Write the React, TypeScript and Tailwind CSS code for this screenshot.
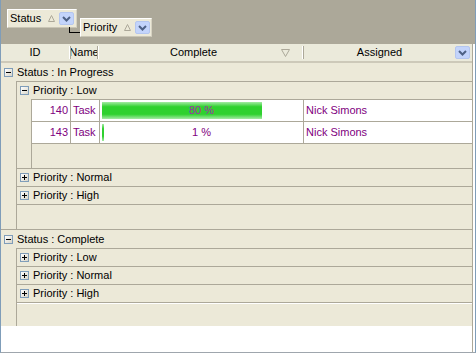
import React from "react";

const rowText = "text-[#800080]";

function Toggle({ open }: { open: boolean }) {
  return (
    <span className="relative inline-block h-[9px] w-[9px] shrink-0 border border-[#7f9db9] bg-gradient-to-br from-white to-[#d8d5c8]">
      <span className="absolute left-[1px] top-[3px] h-px w-[5px] bg-black" />
      {!open && <span className="absolute left-[3px] top-[1px] h-[5px] w-px bg-black" />}
    </span>
  );
}

function DropButton() {
  return (
    <span className="flex h-[13px] w-[15px] shrink-0 items-center justify-center rounded-[2px] border border-[#b4c6ef] bg-[#c3d4fb]">
      <svg width="9" height="6" viewBox="0 0 9 6">
        <path d="M1 1 L4.5 4.5 L8 1" fill="none" stroke="#4d6185" strokeWidth="2" />
      </svg>
    </span>
  );
}

function SortUp() {
  return (
    <svg width="7" height="7" viewBox="0 0 7 7" className="shrink-0">
      <polygon points="3.5,0.5 6.5,6.5 0.5,6.5" fill="none" stroke="#aca899" />
    </svg>
  );
}

function GroupRow({ label, open, top = true, h = "h-[18px]" }: { label: string; open: boolean; top?: boolean; h?: string }) {
  return (
    <div className={`flex ${h} shrink-0 items-center gap-[4px] pl-[3px] ${top ? "border-t border-[#aca899]" : ""}`}>
      <Toggle open={open} />
      <span className="whitespace-nowrap">{label}</span>
    </div>
  );
}

function DataRow({ id, pct }: { id: number; pct: number }) {
  return (
    <div className="flex h-[22px] border-t border-[#aca899] bg-white">
      <div className={`flex w-[39px] items-center justify-end border-r border-[#aca899] pr-[2px] ${rowText}`}>{id}</div>
      <div className={`flex w-[29px] items-center border-r border-[#aca899] pl-[2px] ${rowText}`}>Task</div>
      <div className="relative w-[204px] border-r border-[#aca899]">
        <div
          className="absolute bottom-[2px] left-[2px] top-[2px] bg-[linear-gradient(to_bottom,#a4eaa4_0%,#2fd12f_28%,#2fd12f_72%,#a4eaa4_100%)]"
          style={{ width: `${pct * 2}px` }}
        />
        <div className={`absolute inset-0 flex items-center justify-center ${pct > 50 ? "text-[#a02fa8]" : rowText}`}>
          {pct} %
        </div>
      </div>
      <div className={`flex flex-1 items-center pl-[2px] ${rowText}`}>Nick Simons</div>
    </div>
  );
}

function Chip({ label, textW, className }: { label: string; textW: string; className: string }) {
  return (
    <div
      className={`flex h-[19px] items-center border border-t-white border-l-white border-r-[#d6d2c2] border-b-[#c9c5b5] bg-[#ece9d8] pl-[2px] ${className}`}
    >
      <span className={`${textW} whitespace-nowrap`}>{label}</span>
      <SortUp />
      <span className="ml-[4px]">
        <DropButton />
      </span>
    </div>
  );
}

export default function App() {
  return (
    <div className="flex h-[353px] w-[476px] flex-col border-x border-b border-x-[#7f9db9] border-b-[#9fa6ad] bg-white font-['Liberation_Sans',Arial,sans-serif] text-[11px] leading-none text-black">
      {/* group by panel */}
      <div className="relative flex h-[44px] shrink-0 items-start bg-[#aca899] pl-[6px] pt-[9px]">
        <Chip label="Status" textW="w-[38px]" className="pr-[2px]" />
        <span className="absolute left-[68px] top-[27px] h-[6px] w-[12px] border-b border-l border-black" />
        <Chip label="Priority" textW="w-[41px]" className="relative ml-[3px] mt-[9px] pr-[1px]" />
      </div>

      <div className="flex flex-1 flex-col">
        <div className="flex w-[472px] flex-1 flex-col border-r border-[#aca899]">
          {/* header */}
          <div className="flex h-[19px] shrink-0 items-center border-b-2 border-[#cdc9b9] bg-[#ebeadb]">
            <div className="flex w-[68px] justify-center">ID</div>
            <div className="flex h-[13px] w-[2px]">
              <span className="w-px bg-white" />
              <span className="w-px bg-[#aca899]" />
            </div>
            <div className="flex w-[26px] justify-center overflow-hidden whitespace-nowrap">Name</div>
            <div className="flex h-[13px] w-[2px]">
              <span className="w-px bg-[#aca899]" />
              <span className="w-px bg-white" />
            </div>
            <div className="flex w-[203px] items-center pr-[12px]">
              <span className="flex-1 pl-[7px] text-center">Complete</span>
              <svg width="9" height="8" viewBox="0 0 9 8">
                <polygon points="0.5,0.5 8.5,0.5 4.5,7.5" fill="none" stroke="#aca899" />
              </svg>
            </div>
            <div className="flex h-[13px] w-[2px]">
              <span className="w-px bg-white" />
              <span className="w-px bg-[#aca899]" />
            </div>
            <div className="flex flex-1 items-center pr-[2px]">
              <span className="flex-1 text-center">Assigned</span>
              <DropButton />
            </div>
          </div>

          {/* body */}
          <div className="flex h-[263px] shrink-0 flex-col bg-[#ece9d8]">
            <GroupRow label="Status : In Progress" open top={false} h="h-[18px]" />
            <div className="ml-[15px] border-l border-[#aca899]">
              <GroupRow label="Priority : Low" open />
              <div className="ml-[14px] border-l border-[#aca899]">
                <DataRow id={140} pct={80} />
                <DataRow id={143} pct={1} />
                <div className="h-[25px] border-t border-[#aca899]" />
              </div>
              <GroupRow label="Priority : Normal" open={false} />
              <GroupRow label="Priority : High" open={false} />
              <div className="h-[25px] border-t border-[#aca899]" />
            </div>
            <GroupRow label="Status : Complete" open h="h-[19px]" />
            <div className="ml-[15px] flex-1 border-l border-[#aca899]">
              <GroupRow label="Priority : Low" open={false} />
              <GroupRow label="Priority : Normal" open={false} />
              <GroupRow label="Priority : High" open={false} />
              <div className="h-[24px] border-t border-[#aca899] shadow-[inset_0_1px_0_#fff]" />
            </div>
          </div>

          <div className="flex-1 bg-white" />
        </div>
      </div>
    </div>
  );
}
